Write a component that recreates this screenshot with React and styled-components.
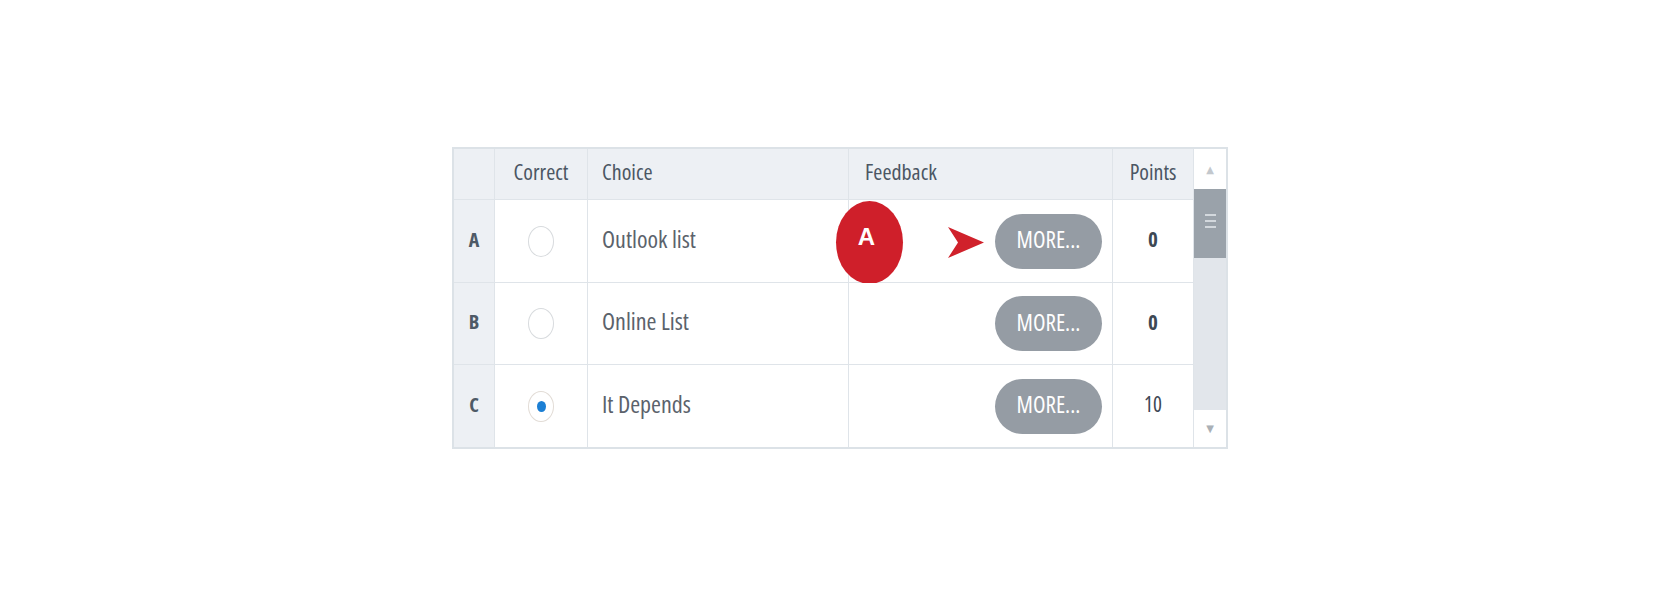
import styled, { createGlobalStyle } from "styled-components"

const GlobalStyle = createGlobalStyle`
  html, body {
    margin: 0;
    padding: 0;
    background: #fff;
  }
  body {
    font-family: "Open Sans", "Liberation Sans", sans-serif;
    font-stretch: 81%;
  }
`

const Page = styled.div`
  display: flex;
  align-items: center;
  justify-content: center;
  width: 100%;
  height: 596px;
`

const Frame = styled.div`
  display: flex;
  border: 2px solid #dce2e7;
  background: #fff;
`

const Grid = styled.div`
  display: grid;
  grid-template-columns: 41px 93px 261px 264px 81px;
  grid-template-rows: 51px 83px 82px 82px;
`

const Cell = styled.div`
  position: relative;
  box-sizing: border-box;
  display: flex;
  align-items: center;
  justify-content: ${(p) => p.$align || "flex-start"};
  padding: ${(p) => p.$pad || "0"};
  border-right: 1px solid #dfe4e9;
  border-bottom: ${(p) => (p.$last ? "none" : "1px solid #dfe4e9")};
  background: ${(p) => (p.$shade ? "#edf0f4" : "#fff")};
`

const HeadText = styled.span`
  margin-bottom: 6px;
  font-size: 22px;
  color: #4b5663;
`

const RowLetter = styled.span`
  margin-bottom: 4px;
  font-size: 20px;
  font-weight: 700;
  color: #4e5a66;
`

const ChoiceText = styled.span`
  margin-bottom: 6px;
  font-size: 24px;
  color: #5b626b;
`

const PointsText = styled.span`
  margin-bottom: 4px;
  font-size: 21px;
  font-weight: ${(p) => (p.$bold ? 700 : 400)};
  color: #3d4854;
`

const Radio = styled.span`
  box-sizing: border-box;
  display: flex;
  align-items: center;
  justify-content: center;
  width: 26px;
  height: 31px;
  border-radius: 50%;
  border: 1.5px solid ${(p) => (p.$checked ? "#e2dcd6" : "#d8dbde")};
  background: #fff;
`

const RadioDot = styled.span`
  width: 9px;
  height: 11px;
  border-radius: 50%;
  background: #1c7fd4;
`

const MoreButton = styled.button`
  width: 107px;
  height: 55px;
  border: none;
  border-radius: 28px;
  background: #959ca4;
  color: #fff;
  font-family: inherit;
  font-stretch: 78%;
  font-size: 23px;
  padding: 0 0 4px;
  cursor: pointer;
`

const Badge = styled.div`
  position: absolute;
  left: -13px;
  top: 1px;
  width: 67px;
  height: 83px;
  border-radius: 50%;
  background: #cf1f2a;
  display: flex;
  align-items: center;
  justify-content: center;
  padding-bottom: 12px;
  padding-right: 6px;
  box-sizing: border-box;
  color: #fff;
  font-family: "Liberation Sans", Arial, sans-serif;
  font-stretch: normal;
  font-weight: 700;
  font-size: 24px;
`

const Pointer = styled.svg`
  position: absolute;
  left: 99px;
  top: 27px;
`

const Scrollbar = styled.div`
  display: flex;
  flex-direction: column;
  width: 32px;
  background: #e2e6eb;
`

const ScrollButton = styled.div`
  display: flex;
  align-items: center;
  justify-content: center;
  height: ${(p) => p.$h}px;
  background: #fff;
  color: ${(p) => p.$color};
  font-size: 10px;
  font-family: "DejaVu Sans", sans-serif;
  font-stretch: normal;
`

const Thumb = styled.div`
  display: flex;
  flex-direction: column;
  align-items: center;
  gap: 4px;
  height: 69px;
  padding-top: 25px;
  box-sizing: border-box;
  background: #9aa2aa;
`

const Grip = styled.span`
  width: 11px;
  height: 2px;
  background: #d3d8dd;
`

const Spacer = styled.div`
  flex: 1;
`

const rows = [
  { key: "A", choice: "Outlook list", points: "0", checked: false, bold: true, note: true },
  { key: "B", choice: "Online List", points: "0", checked: false, bold: true },
  { key: "C", choice: "It Depends", points: "10", checked: true, bold: false },
]

export default function App() {
  return (
    <>
      <GlobalStyle />
      <Page>
        <Frame>
          <Grid>
            <Cell $shade />
            <Cell $shade $align="center">
              <HeadText>Correct</HeadText>
            </Cell>
            <Cell $shade $pad="0 0 0 14px">
              <HeadText>Choice</HeadText>
            </Cell>
            <Cell $shade $pad="0 0 0 16px">
              <HeadText>Feedback</HeadText>
            </Cell>
            <Cell $shade $align="center">
              <HeadText>Points</HeadText>
            </Cell>

            {rows.map((r, i) => {
              const last = i === rows.length - 1
              return [
                <Cell key={r.key + "l"} $shade $last={last} $align="center">
                  <RowLetter>{r.key}</RowLetter>
                </Cell>,
                <Cell key={r.key + "r"} $last={last} $align="center">
                  <Radio $checked={r.checked}>{r.checked && <RadioDot />}</Radio>
                </Cell>,
                <Cell key={r.key + "c"} $last={last} $pad="0 0 0 14px">
                  <ChoiceText>{r.choice}</ChoiceText>
                </Cell>,
                <Cell key={r.key + "f"} $last={last} $align="flex-end" $pad="0 10px 0 0">
                  {r.note && (
                    <>
                      <Badge>A</Badge>
                      <Pointer width="36" height="31" viewBox="0 0 36 31">
                        <polygon points="0,0 36,15.5 0,31 10,15.5" fill="#d0212b" />
                      </Pointer>
                    </>
                  )}
                  <MoreButton>MORE...</MoreButton>
                </Cell>,
                <Cell key={r.key + "p"} $last={last} $align="center">
                  <PointsText $bold={r.bold}>{r.points}</PointsText>
                </Cell>,
              ]
            })}
          </Grid>
          <Scrollbar>
            <ScrollButton $h={40} $color="#c3c8cd">▲</ScrollButton>
            <Thumb>
              <Grip />
              <Grip />
              <Grip />
            </Thumb>
            <Spacer />
            <ScrollButton $h={37} $color="#aab0b6">▼</ScrollButton>
          </Scrollbar>
        </Frame>
      </Page>
    </>
  )
}
